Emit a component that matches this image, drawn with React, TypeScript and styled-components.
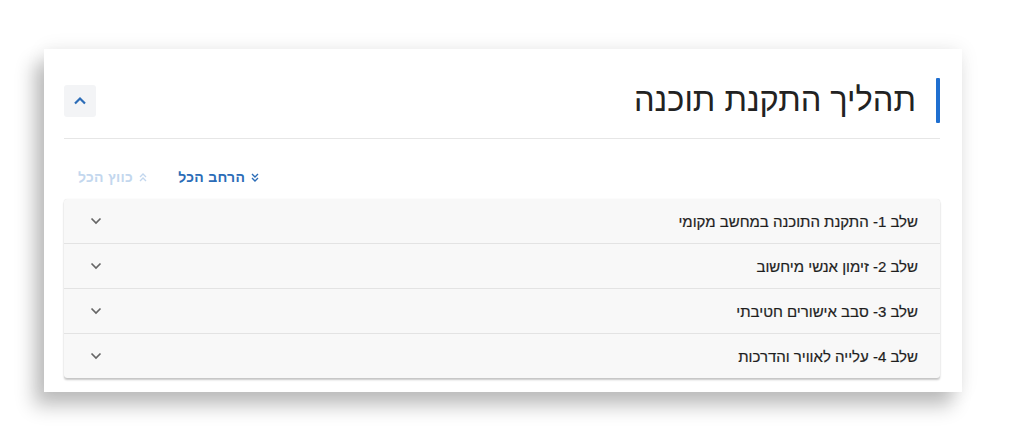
import React from "react";
import styled, { createGlobalStyle } from "styled-components";

const Global = createGlobalStyle`
  html, body { margin: 0; padding: 0; background: #ffffff; }
  body { font-family: "Liberation Sans", Arial, sans-serif; }
`;

const Page = styled.div`
  min-height: 439px;
  box-sizing: border-box;
  padding: 49px 0 47px 44px;
`;

const Card = styled.section`
  direction: rtl;
  width: 918px;
  height: 343px;
  box-sizing: border-box;
  background: #fff;
  padding: 29px 22px 14px 20px;
  box-shadow: -10px 14px 18px rgba(0, 0, 0, 0.24), 0 0 18px rgba(0, 0, 0, 0.08);
  display: flex;
  flex-direction: column;
`;

const Header = styled.header`
  display: flex;
  align-items: center;
  justify-content: space-between;
  padding-bottom: 15px;
  border-bottom: 1px solid #e6e6e6;
`;

const TitleWrap = styled.div`
  display: flex;
  align-items: center;
  gap: 20px;
`;

const Bar = styled.span`
  width: 4px;
  height: 45px;
  background: #1f6fd0;
  border-radius: 1px;
`;

const Title = styled.h1`
  margin: 0;
  font-size: 32.6px;
  font-weight: 400;
  color: #222;
  line-height: 1;
`;

const IconButton = styled.button`
  width: 32px;
  height: 32px;
  border: 0;
  border-radius: 3px;
  background: #f3f4f6;
  display: flex;
  align-items: center;
  justify-content: center;
  padding: 0;
`;

const Links = styled.div`
  display: flex;
  justify-content: flex-end;
  gap: 7px;
  margin-top: 28px;
  margin-bottom: 12px;
  padding-left: 2px;
`;

const LinkButton = styled.button<{ $disabled?: boolean }>`
  display: flex;
  align-items: center;
  gap: 6px;
  border: 0;
  background: none;
  padding: 0 12px;
  height: 20px;
  font-family: "Liberation Sans", Arial, sans-serif;
  font-size: 14px;
  font-weight: 700;
  letter-spacing: 0.3px;
  direction: rtl;
  color: ${(p) => (p.$disabled ? "#c3d7ee" : "#2b6cb7")};
`;

const Accordion = styled.div`
  background: #f8f8f8;
  border-radius: 3px;
  box-shadow: 0 2px 2px rgba(0, 0, 0, 0.22), 0 0 1px rgba(0, 0, 0, 0.12);
`;

const Row = styled.div`
  height: 44px;
  display: flex;
  align-items: center;
  justify-content: space-between;
  padding: 0 22px 0 26px;
  & + & {
    border-top: 1px solid #e3e3e3;
  }
`;

const RowText = styled.span`
  font-size: 15px;
  color: #1e1e1e;
  -webkit-text-stroke: 0.2px #1e1e1e;
`;

const ChevronUp = () => (
  <svg width="14" height="9" viewBox="0 0 14 9">
    <path d="M2 7.5 L7 2.5 L12 7.5" fill="none" stroke="#2b6cb7" strokeWidth="2.2" />
  </svg>
);

const ChevronDown = () => (
  <svg width="12" height="8" viewBox="0 0 12 8">
    <path d="M1.5 1.5 L6 6 L10.5 1.5" fill="none" stroke="#666" strokeWidth="1.7" />
  </svg>
);

const Double = ({ up, color }: { up?: boolean; color: string }) => (
  <svg width="8" height="9" viewBox="0 0 8 9" style={{ transform: up ? "rotate(180deg)" : undefined }}>
    <path d="M1 1 L4 4 L7 1 M1 5 L4 8 L7 5" fill="none" stroke={color} strokeWidth="1.4" />
  </svg>
);

const steps = [
  "שלב 1- התקנת התוכנה במחשב מקומי",
  "שלב 2- זימון אנשי מיחשוב",
  "שלב 3- סבב אישורים חטיבתי",
  "שלב 4- עלייה לאוויר והדרכות",
];

export default function App() {
  return (
    <>
      <Global />
      <Page>
        <Card>
          <Header>
            <TitleWrap>
              <Bar />
              <Title>תהליך התקנת תוכנה</Title>
            </TitleWrap>
            <IconButton aria-label="collapse">
              <ChevronUp />
            </IconButton>
          </Header>
          <Links>
            <LinkButton>
              <Double color="#2b6cb7" />
              הרחב הכל
            </LinkButton>
            <LinkButton $disabled>
              <Double up color="#c3d7ee" />
              כווץ הכל
            </LinkButton>
          </Links>
          <Accordion>
            {steps.map((s) => (
              <Row key={s}>
                <RowText>{s}</RowText>
                <ChevronDown />
              </Row>
            ))}
          </Accordion>
        </Card>
      </Page>
    </>
  );
}
